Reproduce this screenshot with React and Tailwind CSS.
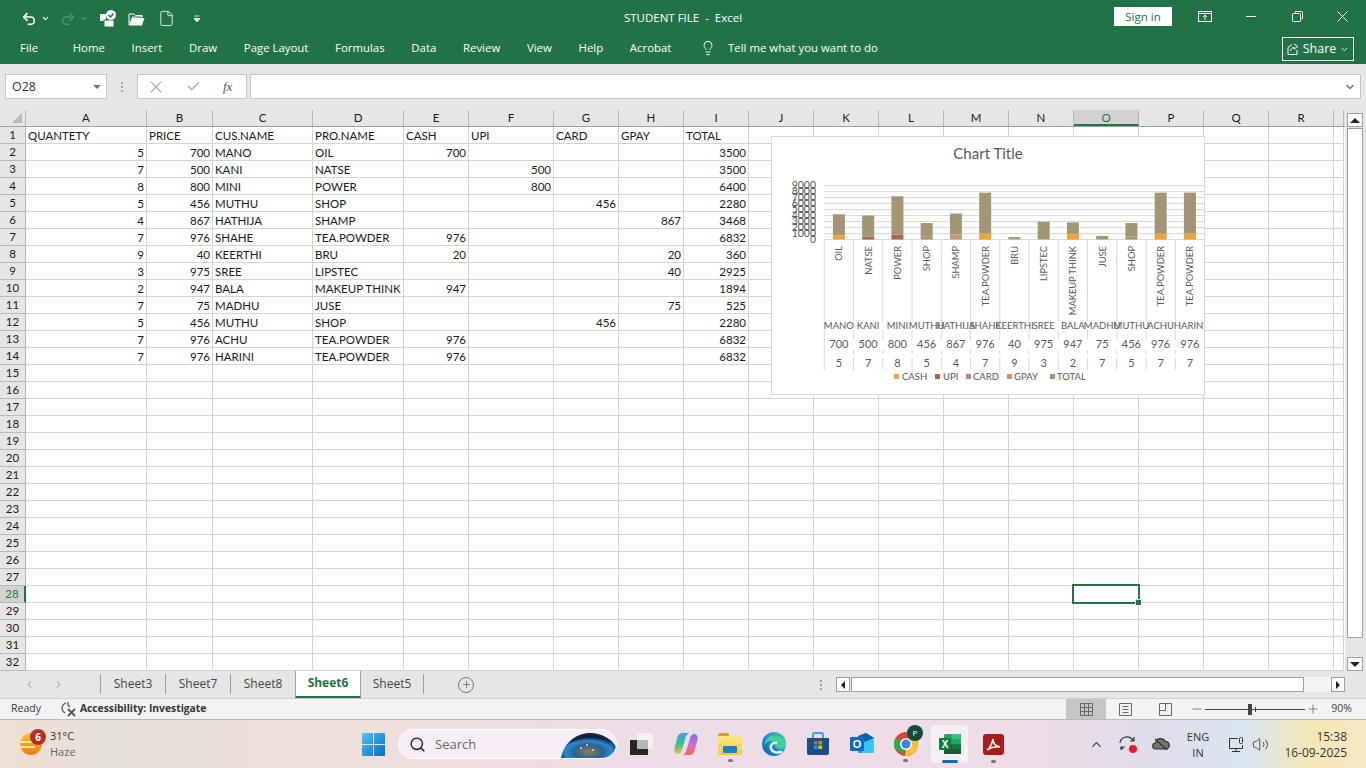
import React from 'react';
import { Undo2, Redo2, ChevronDown, ChevronUp, X, Check, Search, Lightbulb, Plus, Minus, Volume2, ChevronLeft, ChevronRight, File } from 'lucide-react';

const colWidths = [121, 66, 100, 91, 65, 85, 65, 65, 65, 65, 65, 65, 65, 65, 65, 65, 65, 65, 10];
const colNames = ['A', 'B', 'C', 'D', 'E', 'F', 'G', 'H', 'I', 'J', 'K', 'L', 'M', 'N', 'O', 'P', 'Q', 'R', ''];

const sales = [
  { qty: 5, price: 700, cus: 'MANO', pro: 'OIL', cash: 700, total: 3500 },
  { qty: 7, price: 500, cus: 'KANI', pro: 'NATSE', upi: 500, total: 3500 },
  { qty: 8, price: 800, cus: 'MINI', pro: 'POWER', upi: 800, total: 6400 },
  { qty: 5, price: 456, cus: 'MUTHU', pro: 'SHOP', card: 456, total: 2280 },
  { qty: 4, price: 867, cus: 'HATHIJA', pro: 'SHAMP', gpay: 867, total: 3468 },
  { qty: 7, price: 976, cus: 'SHAHE', pro: 'TEA.POWDER', cash: 976, total: 6832 },
  { qty: 9, price: 40, cus: 'KEERTHI', pro: 'BRU', cash: 20, gpay: 20, total: 360 },
  { qty: 3, price: 975, cus: 'SREE', pro: 'LIPSTEC', gpay: 40, total: 2925 },
  { qty: 2, price: 947, cus: 'BALA', pro: 'MAKEUP THINK', cash: 947, total: 1894 },
  { qty: 7, price: 75, cus: 'MADHU', pro: 'JUSE', gpay: 75, total: 525 },
  { qty: 5, price: 456, cus: 'MUTHU', pro: 'SHOP', card: 456, total: 2280 },
  { qty: 7, price: 976, cus: 'ACHU', pro: 'TEA.POWDER', cash: 976, total: 6832 },
  { qty: 7, price: 976, cus: 'HARINI', pro: 'TEA.POWDER', cash: 976, total: 6832 },
];

const rowCells = (i) => {
  if (i === 0) return ['QUANTETY', 'PRICE', 'CUS.NAME', 'PRO.NAME', 'CASH', 'UPI', 'CARD', 'GPAY', 'TOTAL'];
  const s = sales[i - 1];
  if (!s) return [];
  return [s.qty, s.price, s.cus, s.pro, s.cash, s.upi, s.card, s.gpay, s.total];
};

const menuTabs = ['Home', 'Insert', 'Draw', 'Page Layout', 'Formulas', 'Data', 'Review', 'View', 'Help', 'Acrobat'];

const series = [
  { key: 'cash', label: 'CASH', color: '#f0a22e', box: 122, text: 130 },
  { key: 'upi', label: 'UPI', color: '#a5644e', box: 163, text: 171 },
  { key: 'card', label: 'CARD', color: '#b58b80', box: 194, text: 201 },
  { key: 'gpay', label: 'GPAY', color: '#c3986d', box: 235, text: 242 },
  { key: 'total', label: 'TOTAL', color: '#a19574', box: 278, text: 285 },
];

// the separators between categories break around the three label rows
const tickSegments = [[102.5, 184.5], [193, 203], [213, 218], [221, 233]];

const SalesChart = () => {
  const x0 = 52.3;
  const step = 29.25;
  const y0 = 102.5;
  const perK = 6;
  return (
    <svg width="432" height="257" className="block" style={{ fontFamily: 'Lato, sans-serif' }}>
      <text x="216" y="22" textAnchor="middle" fontSize="15" fill="#595959">Chart Title</text>
      {[0, 1, 2, 3, 4, 5, 6, 7, 8, 9].map((k) => (
        <line key={k} x1={x0} x2="432" y1={y0 - k * perK} y2={y0 - k * perK} stroke="#d9d9d9" />
      ))}
      <g opacity="0.99">
        {[0, 1, 2, 3, 4, 5, 6, 7, 8, 9].map((k) => (
          <text key={k} x="44" y={y0 - k * perK + 3.5} textAnchor="end" fontSize="10.5" fill="#595959">{k * 1000}</text>
        ))}
      </g>
      <line x1={x0} x2={x0} y1={y0} y2="233" stroke="#d9d9d9" />
      <line x1={x0 + step * 13} x2={x0 + step * 13} y1={y0} y2="233" stroke="#d9d9d9" />
      {sales.map((s, i) => {
        const cx = x0 + step * (i + 0.5);
        let used = 0;
        return (
          <g key={i} opacity="0.99">
            {i > 0 && tickSegments.map(([a, b]) => (
              <line key={a} x1={x0 + step * i} x2={x0 + step * i} y1={a} y2={b} stroke="#d9d9d9" />
            ))}
            {series.map((ser) => {
              const h = ((s[ser.key] || 0) / 1000) * perK;
              used += h;
              return h ? <rect key={ser.key} x={cx - 6} y={y0 - used} width="12" height={h} fill={ser.color} /> : null;
            })}
            <text transform={`translate(${cx + 3.5} 109) rotate(-90)`} textAnchor="end" fontSize="9.3" fill="#595959">{s.pro}</text>
            <text x={cx} y="192" textAnchor="middle" fontSize="9.5" fill="#595959">{s.cus}</text>
            <text x={cx} y="211" textAnchor="middle" fontSize="11" fill="#595959">{s.price}</text>
            <text x={cx} y="229.500" textAnchor="middle" fontSize="11" fill="#595959">{s.qty}</text>
          </g>
        );
      })}
      {series.map((ser) => (
        <g key={ser.key}>
          <rect x={ser.box} y="237" width="5" height="5" fill={ser.color} />
          <text x={ser.text} y="243" fontSize="9.5" fill="#595959">{ser.label}</text>
        </g>
      ))}
    </svg>
  );
};

const Sheet = () => {
  const rows = Array.from({ length: 32 }, (_, i) => i);
  return (
    <div className="relative flex-1 min-w-0 h-[561px] overflow-hidden bg-white font-['Lato',sans-serif] text-[11.5px] text-[#1a1a1a]">
      <div className="flex h-[17px] bg-[#e6e6e6] border-b border-[#9f9f9f]">
        <div className="w-[26px] shrink-0 border-r border-[#b8b8b8] flex items-end justify-end">
          <div className="w-0 h-0 mr-[3px] mb-[3px] border-l-[10px] border-l-transparent border-b-[10px] border-b-[#b8b8b8]"></div>
        </div>
        {colWidths.map((w, i) => (
          <div
            key={i}
            style={{ width: w }}
            className={`shrink-0 text-center leading-[16px] border-r border-[#b8b8b8] ${colNames[i] === 'O' ? 'bg-[#d2d2d2] border-b-2 border-b-[#217346] text-[#217346]' : ''}`}
          >
            {colNames[i]}
          </div>
        ))}
      </div>
      {rows.map((r) => {
        const cells = rowCells(r);
        return (
          <div key={r} className="flex h-[17px]">
            <div className={`w-[26px] shrink-0 text-center leading-[16px] border-r border-b border-[#b8b8b8] ${r === 27 ? 'bg-[#d2d2d2] text-[#217346] border-r-2 border-r-[#217346]' : 'bg-[#e6e6e6]'}`}>
              {r + 1}
            </div>
            {colWidths.map((w, c) => {
              const v = cells[c];
              return (
                <div
                  key={c}
                  style={{ width: w }}
                  className={`relative shrink-0 leading-[17px] whitespace-nowrap border-r border-b border-[#d4d4d4] ${typeof v === 'number' ? 'text-right pr-[2px]' : 'text-left pl-[2px]'}`}
                >
                  {v}
                  {r === 27 && c === 14 && (
                    <div className="absolute z-10 -left-[2px] -top-[2px] w-[68px] h-[20px] border-2 border-[#217346]">
                      <div className="absolute -right-[4px] -bottom-[4px] w-[7px] h-[7px] bg-[#217346] border border-white"></div>
                    </div>
                  )}
                </div>
              );
            })}
          </div>
        );
      })}
      <div className="absolute z-10 left-[771px] top-[26px] w-[434px] h-[259px] bg-white border border-[#d9d9d9]">
        <SalesChart />
      </div>
    </div>
  );
};

const ExcelIcon = () => (
  <svg width="24" height="24" viewBox="0 0 24 24">
    <rect x="6" y="2" width="17" height="20" rx="1.5" fill="#21a366" />
    <rect x="14" y="2" width="9" height="5" fill="#33c481" />
    <rect x="14" y="12" width="9" height="5" fill="#107c41" />
    <rect x="6" y="12" width="8" height="10" fill="#185c37" />
    <rect x="14" y="17" width="9" height="5" fill="#185c37" />
    <rect x="1" y="6" width="12" height="12" rx="1" fill="#107c41" />
    <text x="7" y="15.5" textAnchor="middle" fontSize="10" fontWeight="700" fill="#fff" fontFamily="Liberation Sans">X</text>
  </svg>
);

const TaskDot = ({ className }) => (
  <div className={`absolute w-[5px] h-[3px] rounded-full bg-[#777] ${className}`}></div>
);

export default function App() {
  return (
    <div className="w-[1366px] h-[768px] overflow-hidden flex flex-col bg-[#e6e6e6] font-['Open_Sans',sans-serif]">
      {/* title bar */}
      <div className="h-[36px] shrink-0 bg-[#217346] text-white grid grid-cols-[1fr_auto_1fr] items-center">
        <div className="flex items-center pl-[21px] pt-[1px]">
          <Undo2 size={16} strokeWidth={2.4} />
          <ChevronDown size={9} strokeWidth={3} className="ml-[4px]" />
          <Redo2 size={16} strokeWidth={2.4} className="ml-[10px] text-[#4d9470]" />
          <ChevronDown size={9} strokeWidth={3} className="ml-[4px] text-[#4d9470]" />
          <svg width="18" height="18" viewBox="0 0 18 18" className="ml-[10px]">
            <rect x="1" y="4" width="6" height="7" fill="#fff" />
            <rect x="5" y="10" width="10" height="7" fill="#fff" stroke="#217346" />
            <circle cx="12" cy="5" r="5" fill="#fff" />
            <path d="M9.5 5l2 2 3-3.5" stroke="#217346" strokeWidth="1.5" fill="none" />
          </svg>
          <svg width="17" height="14" viewBox="0 0 17 14" className="ml-[11px]">
            <path d="M1 13V2h5l1.500 1.500H14V5H4.500L1.500 13z" fill="none" stroke="#fff" />
            <path d="M4.500 6H16.500L14 13.500H1.500z" fill="#fff" />
          </svg>
          <File size={17} strokeWidth={1.2} className="ml-[13px]" />
          <svg width="6" height="8" viewBox="0 0 6 8" className="ml-[19px]">
            <path d="M0.5 1h5M0 3.500h6L3 7z" stroke="#fff" strokeWidth="0.8" fill="#fff" />
          </svg>
        </div>
        <div className="text-[11.5px]">STUDENT FILE&nbsp; -&nbsp; Excel</div>
        <div className="flex items-center justify-end mb-[3px]">
          <div className="w-[58px] h-[19px] bg-white text-[#217346] text-[11.5px] leading-[20px] text-center">Sign in</div>
          <svg width="14" height="11" viewBox="0 0 14 11" className="ml-[26px]" fill="none" stroke="#fff">
            <rect x="0.5" y="0.5" width="13" height="10" />
            <path d="M0.5 2.5h13M7 9V4M5 6l2-2 2 2" />
          </svg>
          <div className="ml-[34px] w-[10px] h-[1px] bg-white"></div>
          <svg width="11" height="11" viewBox="0 0 11 11" className="ml-[36px]" fill="none" stroke="#fff">
            <rect x="0.5" y="2.5" width="8" height="8" rx="1" />
            <path d="M3 2.5v-1a1 1 0 011-1h5.5a1 1 0 011 1V7a1 1 0 01-1 1h-1" />
          </svg>
          <svg width="11" height="11" viewBox="0 0 11 11" className="ml-[34px] mr-[18px]" fill="none" stroke="#fff">
            <path d="M.5.5l10 10M10.500.5l-10 10" />
          </svg>
        </div>
      </div>
      {/* ribbon tabs */}
      <div className="h-[28px] shrink-0 bg-[#217346] text-white text-[11.4px] flex items-center gap-[26.7px] pl-[20px] pb-[4px]">
        <span className="mr-[8px]">File</span>
        {menuTabs.map((t) => (
          <span key={t}>{t}</span>
        ))}
        <span className="flex items-center gap-[12px] ml-[2px]">
          <Lightbulb size={16} strokeWidth={1.4} />
          Tell me what you want to do
        </span>
        <div className="ml-auto mr-[12px] mb-[-1px] w-[72px] h-[24px] border border-white flex items-center justify-center gap-[4px] pt-[1px] text-[12.5px] font-medium">
          <svg width="12" height="12" viewBox="0 0 12 12" fill="none" stroke="#fff">
            <path d="M1 4.5v7h9V7M1 4.5L5 1.5M7 1l4 2.5L7 6V4.5C5 4.5 4 6 3.5 8" />
          </svg>
          Share
          <ChevronDown size={9} strokeWidth={2.5} />
        </div>
      </div>
      {/* formula bar */}
      <div className="h-[46px] shrink-0 bg-[#e6e6e6] flex pt-[10px] pl-[5px] pr-[5px]">
        <div className="w-[102px] h-[25px] bg-white border border-[#c6c6c6] flex items-center justify-between pl-[6px] pr-[5px] pt-[1px] text-[12.5px] text-[#333]">
          O28
          <div className="w-0 h-0 border-x-[4px] border-x-transparent border-t-[4px] border-t-[#777]"></div>
        </div>
        <div className="w-[30px] flex justify-center items-center h-[25px]">
          <div className="flex flex-col gap-[2px]">
            <span className="w-[2px] h-[2px] bg-[#aaa]"></span>
            <span className="w-[2px] h-[2px] bg-[#aaa]"></span>
            <span className="w-[2px] h-[2px] bg-[#aaa]"></span>
          </div>
        </div>
        <div className="w-[110px] h-[25px] bg-white border border-[#c6c6c6] flex items-center pl-[8px]">
          <X size={20} strokeWidth={1.4} className="text-[#b0b0b0]" />
          <Check size={15} strokeWidth={2.4} className="text-[#b0b0b0] ml-[20px]" />
          <span className="ml-[22px] text-[13px] italic font-['Liberation_Serif',serif] text-[#555]">fx</span>
        </div>
        <div className="ml-[3px] flex-1 h-[25px] bg-white border border-[#c6c6c6] flex items-center justify-end pr-[4px]">
          <ChevronDown size={12} strokeWidth={3} className="text-[#777]" />
        </div>
      </div>
      {/* sheet + vertical scrollbar */}
      <div className="h-[561px] shrink-0 flex bg-[#e6e6e6]">
        <Sheet />
        <div className="w-[21px] shrink-0 pl-[2px] pr-[3px] pt-[3px] flex flex-col">
          <div className="h-[14px] bg-white border border-[#9f9f9f] flex items-center justify-center">
            <div className="w-0 h-0 border-x-[5px] border-x-transparent border-b-[5px] border-b-[#222]"></div>
          </div>
          <div className="mt-[1px] h-[510px] bg-white border border-[#9f9f9f]"></div>
          <div className="mt-auto h-[14px] bg-white border border-[#9f9f9f] flex items-center justify-center">
            <div className="w-0 h-0 border-x-[5px] border-x-transparent border-t-[5px] border-t-[#222]"></div>
          </div>
        </div>
      </div>
      {/* sheet tabs */}
      <div className="h-[27px] shrink-0 bg-[#e6e6e6] flex items-center text-[12px] text-[#444]">
        <ChevronLeft size={11} strokeWidth={2.5} className="ml-[24px] text-[#b5b5b5]" />
        <ChevronRight size={11} strokeWidth={2.5} className="ml-[18px] text-[#b5b5b5]" />
        <div className="ml-[36px] flex items-center h-full">
          {['Sheet3', 'Sheet7', 'Sheet8'].map((s) => (
            <div key={s} className="w-[65px] h-[20px] mt-[-2px] border-l border-[#9f9f9f] text-center leading-[20px]">{s}</div>
          ))}
          <div className="w-[66px] h-full bg-white border-x border-[#9f9f9f] border-b-2 border-b-[#217346] text-[#217346] font-bold text-center leading-[24px]">Sheet6</div>
          <div className="w-[63px] h-[20px] mt-[-2px] border-r border-[#9f9f9f] text-center leading-[20px]">Sheet5</div>
        </div>
        <div className="ml-[34px] w-[16px] h-[16px] rounded-full border border-[#777] flex items-center justify-center">
          <Plus size={11} strokeWidth={2} className="text-[#777]" />
        </div>
        <div className="ml-[346px] flex flex-col gap-[2px]">
          <span className="w-[2px] h-[2px] bg-[#999]"></span>
          <span className="w-[2px] h-[2px] bg-[#999]"></span>
          <span className="w-[2px] h-[2px] bg-[#999]"></span>
        </div>
        <div className="ml-[14px] w-[14px] h-[15px] bg-white border border-[#9f9f9f] flex items-center justify-center">
          <div className="w-0 h-0 border-y-[4px] border-y-transparent border-r-[4px] border-r-[#222]"></div>
        </div>
        <div className="ml-[1px] w-[453px] h-[15px] bg-white border border-[#9f9f9f]"></div>
        <div className="w-[27px] h-[15px] bg-[#f3f3f3]"></div>
        <div className="w-[14px] h-[15px] bg-white border border-[#9f9f9f] flex items-center justify-center">
          <div className="w-0 h-0 border-y-[4px] border-y-transparent border-l-[4px] border-l-[#222]"></div>
        </div>
      </div>
      {/* status bar */}
      <div className="h-[22px] shrink-0 bg-[#f3f3f3] border-t border-[#d0d0d0] border-b border-b-[#b8b8b8] flex items-center text-[10.5px] text-[#333]">
        <span className="ml-[11px]">Ready</span>
        <svg width="17" height="16" viewBox="0 0 17 16" className="ml-[19px]" fill="none" stroke="#555" strokeWidth="1.3">
          <path d="M6 2a6 6 0 00-4 5 6 6 0 003 5M8 1v3l2 2" />
          <path d="M8 8l7 7M15 8l-7 7" strokeWidth="1.8" />
        </svg>
        <span className="ml-[3px] font-bold text-[10.3px]">Accessibility: Investigate</span>
        <div className="ml-auto w-[40px] h-full bg-[#c6c6c6] flex items-center justify-center">
          <svg width="13" height="13" viewBox="0 0 13 13" fill="none" stroke="#666">
            <path d="M.5.5h12v12H.5zM.5 4.5h12M.5 8.5h12M4.5.5v12M8.5.5v12" />
          </svg>
        </div>
        <svg width="13" height="13" viewBox="0 0 13 13" className="ml-[13px]" fill="none" stroke="#666">
          <path d="M.5.5h12v12H.5zM3.5 3.5h6M3.5 6.5h6M3.5 9.5h6" />
        </svg>
        <svg width="13" height="13" viewBox="0 0 13 13" className="ml-[27px]" fill="none" stroke="#666">
          <path d="M.5.5h12v12H.5zM.5 7.5h6V.5" />
        </svg>
        <Minus size={14} strokeWidth={1.2} className="ml-[18px] text-[#555]" />
        <div className="relative ml-[1px] w-[100px] h-[1px] bg-[#444]">
          <div className="absolute left-[43px] -top-[5px] w-[4px] h-[11px] bg-[#444]"></div>
          <div className="absolute left-[50px] -top-[2px] w-[1px] h-[5px] bg-[#444]"></div>
        </div>
        <Plus size={14} strokeWidth={1.2} className="ml-[1px] text-[#555]" />
        <span className="ml-[11px] mr-[14px] text-[#444]">90%</span>
      </div>
      {/* taskbar */}
      <div className="flex-1 flex items-center text-[#333] bg-[linear-gradient(90deg,#f0dfd5_0%,#e6e0da_8%,#efdfd9_22%,#eddde6_45%,#eedde6_75%,#e0dcea_84%,#d9e6ef_91%,#f3e7b8_96%,#f9e8c4_100%)]">
        <div className="relative ml-[20px] w-[22px] h-[22px] rounded-full bg-[linear-gradient(180deg,#fcc52e,#ee7a12)]">
          <div className="absolute top-[8px] -left-[1px] w-[17px] h-[2px] bg-[#fbe3a4]"></div>
          <div className="absolute top-[13px] -left-[2px] w-[17px] h-[2px] bg-[#fbe3a4]"></div>
          <div className="absolute -top-[4px] left-[10px] w-[16px] h-[16px] rounded-full bg-[#b92c22] text-white text-[10px] font-bold leading-[16px] text-center">6</div>
        </div>
        <div className="ml-[8px] text-[11px] leading-[16px] w-[50px]">
          <div>31°C</div>
          <div className="text-[#666]">Haze</div>
        </div>
        <svg width="23" height="23" viewBox="0 0 23 23" className="ml-[262px]">
          <defs>
            <linearGradient id="win" x1="0" y1="0" x2="1" y2="1">
              <stop offset="0" stopColor="#4fc6f7" />
              <stop offset="1" stopColor="#0369c9" />
            </linearGradient>
          </defs>
          <path d="M1 0h10v11H0V1a1 1 0 011-1zM12 0h10a1 1 0 011 1v10H12zM0 12h11v11H1a1 1 0 01-1-1zM12 12h11v10a1 1 0 01-1 1H12z" fill="url(#win)" />
        </svg>
        <div className="relative ml-[13px] w-[219px] h-[30px] rounded-full bg-[#f6eef4] border border-white flex items-center pl-[10px] pt-[1px] overflow-hidden text-[13px] text-[#666]">
          <Search size={17} strokeWidth={2} className="text-[#222]" />
          <span className="ml-[9px]">Search</span>
          <svg width="56" height="30" viewBox="0 0 56 30" className="absolute right-0 top-0">
            <defs>
              <radialGradient id="earth" cx="0.5" cy="0.75" r="0.6">
                <stop offset="0" stopColor="#8a8058" />
                <stop offset="0.45" stopColor="#2f5f8f" />
                <stop offset="0.7" stopColor="#2a88d8" />
                <stop offset="1" stopColor="#0f2a42" />
              </radialGradient>
            </defs>
            <path d="M1 28C4 12 17 3 30 3c12 0 23 7 26 14v11z" fill="url(#earth)" />
            <path d="M8 14c5-6 13-9 22-9 9 0 16 3 21 8-6-3-13-5-21-5-8 0-16 2-22 6z" fill="#0f2436" />
            <circle cx="21" cy="18" r="1" fill="#f4dc8a" />
            <circle cx="27" cy="15" r="1" fill="#f4dc8a" />
            <circle cx="33" cy="20" r="1" fill="#f4dc8a" />
          </svg>
        </div>
        <svg width="23" height="22" viewBox="0 0 23 22" className="ml-[13px]">
          <rect x="7" y="0" width="16" height="16" fill="#f3f1f3" />
          <rect x="0" y="7" width="18" height="15" fill="#262626" />
          <rect x="7" y="7" width="11" height="9" fill="#b8b6b8" />
        </svg>
        <svg width="24" height="24" viewBox="0 0 24 24" className="ml-[21px]">
          <defs>
            <linearGradient id="copA" x1="0.2" y1="0" x2="0.4" y2="1">
              <stop offset="0" stopColor="#2aa4e8" />
              <stop offset="0.55" stopColor="#3ec28a" />
              <stop offset="1" stopColor="#f4c430" />
            </linearGradient>
            <linearGradient id="copB" x1="0.8" y1="0" x2="0.5" y2="1">
              <stop offset="0" stopColor="#7a6ae8" />
              <stop offset="0.5" stopColor="#d46ad8" />
              <stop offset="1" stopColor="#f46a50" />
            </linearGradient>
          </defs>
          <path d="M8 1h7c-2 1-3 3-3.500 5L8 18c-.7 2-2 4-4 4-3 0-4-3-3.500-5.500L3 7c.7-4 2.500-6 5-6z" fill="url(#copA)" />
          <path d="M16 23H9c2-1 3-3 3.500-5L16 6c.7-2 2-4 4-4 3 0 4 3 3.500 5.500L21 17c-.7 4-2.500 6-5 6z" fill="url(#copB)" />
        </svg>
        <div className="relative ml-[20px] w-[24px] h-[22px]">
          <div className="absolute left-0 top-0 w-[11px] h-[6px] bg-[#d99a1e] rounded-t-[2px]"></div>
          <div className="absolute left-0 top-[3px] w-[24px] h-[19px] bg-[linear-gradient(180deg,#fde68a,#fcc933)] rounded-[1px]"></div>
          <div className="absolute left-[5px] top-[13px] w-[14px] h-[7px] bg-[#1481d0] rounded-[1px]"></div>
          <TaskDot className="left-[10px] top-[26px]" />
        </div>
        <svg width="24" height="24" viewBox="0 0 24 24" className="ml-[20px]">
          <defs>
            <linearGradient id="edge" x1="0" y1="1" x2="1" y2="0">
              <stop offset="0" stopColor="#0c59a4" />
              <stop offset="0.6" stopColor="#1b9de2" />
              <stop offset="1" stopColor="#4fd08a" />
            </linearGradient>
          </defs>
          <circle cx="12" cy="12" r="12" fill="url(#edge)" />
          <path d="M24 13c0 3-3 4.500-6 4-3-.5-5-2-5-4.500 0-2-1.500-3.500-4-3.500-3 0-6 2-7 5C3 7 7 3.500 12 3.500 18 3.500 24 7 24 13z" fill="#46cf9a" />
          <path d="M15 11c-4-1-7 1.500-6 5.500s6 5 11 3" fill="none" stroke="#e8f3fa" strokeWidth="2.500" />
        </svg>
        <svg width="24" height="24" viewBox="0 0 24 24" className="ml-[20px]">
          <path d="M1 6h22v15a2 2 0 01-2 2H3a2 2 0 01-2-2z" fill="#1c4f86" />
          <path d="M7 6V3a2 2 0 012-2h6a2 2 0 012 2v3" fill="none" stroke="#3aa0de" strokeWidth="2" />
          <rect x="8" y="9" width="3.500" height="3.500" fill="#f25022" />
          <rect x="12.500" y="9" width="3.500" height="3.500" fill="#7fba00" />
          <rect x="8" y="13.500" width="3.500" height="3.500" fill="#00a4ef" />
          <rect x="12.500" y="13.500" width="3.500" height="3.500" fill="#ffb900" />
        </svg>
        <svg width="24" height="22" viewBox="0 0 24 22" className="ml-[20px]">
          <path d="M8 3l8-3 8 5v13a2 2 0 01-2 2H8z" fill="#1f9fe0" />
          <path d="M8 3l8-3 8 5-8 5z" fill="#0f5fa8" />
          <path d="M10 11l14-6v13a2 2 0 01-2 2H12z" fill="#35c6f4" />
          <rect x="0" y="4" width="14" height="14" rx="1" fill="#0a6cc0" />
          <text x="7" y="15" textAnchor="middle" fontSize="11" fontWeight="700" fill="#fff" fontFamily="Liberation Sans">O</text>
        </svg>
        <div className="relative ml-[20px] w-[24px] h-[24px]">
          <svg width="24" height="24" viewBox="0 0 24 24">
            <circle cx="12" cy="12" r="12" fill="#db4437" />
            <path d="M12 12L1.600 6A12 12 0 001 17l8 5z" fill="#2fa84f" />
            <path d="M12 12l-1 12A12 12 0 0024 12 12 12 0 0022 5z" fill="#fbc02d" />
            <circle cx="12" cy="12" r="6" fill="#fff" />
            <circle cx="12" cy="12" r="4.500" fill="#3b82e6" />
          </svg>
          <div className="absolute -top-[7px] left-[13px] w-[16px] h-[16px] rounded-full bg-[#0f4c3a] text-white text-[8px] leading-[16px] text-center">P</div>
          <TaskDot className="left-[9px] top-[27px]" />
        </div>
        <div className="relative ml-[13px] w-[37px] h-[38px] bg-[#f6f0f5] rounded-[4px] flex items-center justify-center">
          <ExcelIcon />
          <div className="absolute left-[11px] bottom-0 w-[16px] h-[3px] rounded-full bg-[#0a6cc0]"></div>
        </div>
        <div className="relative ml-[15px] w-[21px] h-[21px] rounded-[3px] bg-[#a81c1c] flex items-center justify-center">
          <svg width="15" height="15" viewBox="0 0 15 15" fill="none" stroke="#fff" strokeWidth="1.5">
            <path d="M1 13c3-2 5-6 6-11 0 4 2 7 7 8-4-.5-9 .5-13 3z" />
          </svg>
          <TaskDot className="left-[8px] top-[26px]" />
        </div>
        <ChevronUp size={15} strokeWidth={1.8} className="ml-[85px]" />
        <div className="relative ml-[15px] w-[18px] h-[18px]">
          <svg width="18" height="18" viewBox="0 0 18 18" fill="none" stroke="#333" strokeWidth="1.2">
            <path d="M1 8a7 7 0 0112-4l2 2M15 2v4h-4M2 15v-3h4M2 12l2 2" />
          </svg>
          <div className="absolute right-0 bottom-0 w-[8px] h-[8px] rounded-full bg-[#ec1c24]"></div>
        </div>
        <svg width="18" height="14" viewBox="0 0 18 14" className="ml-[15px]" fill="#777" stroke="#333" strokeWidth="1.2">
          <path d="M4 12a3 3 0 01-.5-6 5 5 0 019.500-1.500A3.500 3.500 0 0114 12zM3 2l12 11" />
        </svg>
        <div className="ml-[14px] w-[28px] pt-[1px] text-center text-[11px] leading-[16px]">
          <div>ENG</div>
          <div>IN</div>
        </div>
        <svg width="17" height="17" viewBox="0 0 17 17" className="ml-[16px]" fill="none" stroke="#333">
          <path d="M10 2.500H1.500v10h13V9M8 12.500v3M4 15.500h8" />
          <rect x="11.500" y="1.500" width="3" height="6" rx="1" />
        </svg>
        <Volume2 size={17} strokeWidth={1.2} className="ml-[7px]" />
        <div className="ml-auto mr-[19px] pt-[1px] text-right text-[12px] leading-[16px]">
          <div>15:38</div>
          <div>16-09-2025</div>
        </div>
      </div>
    </div>
  );
}
